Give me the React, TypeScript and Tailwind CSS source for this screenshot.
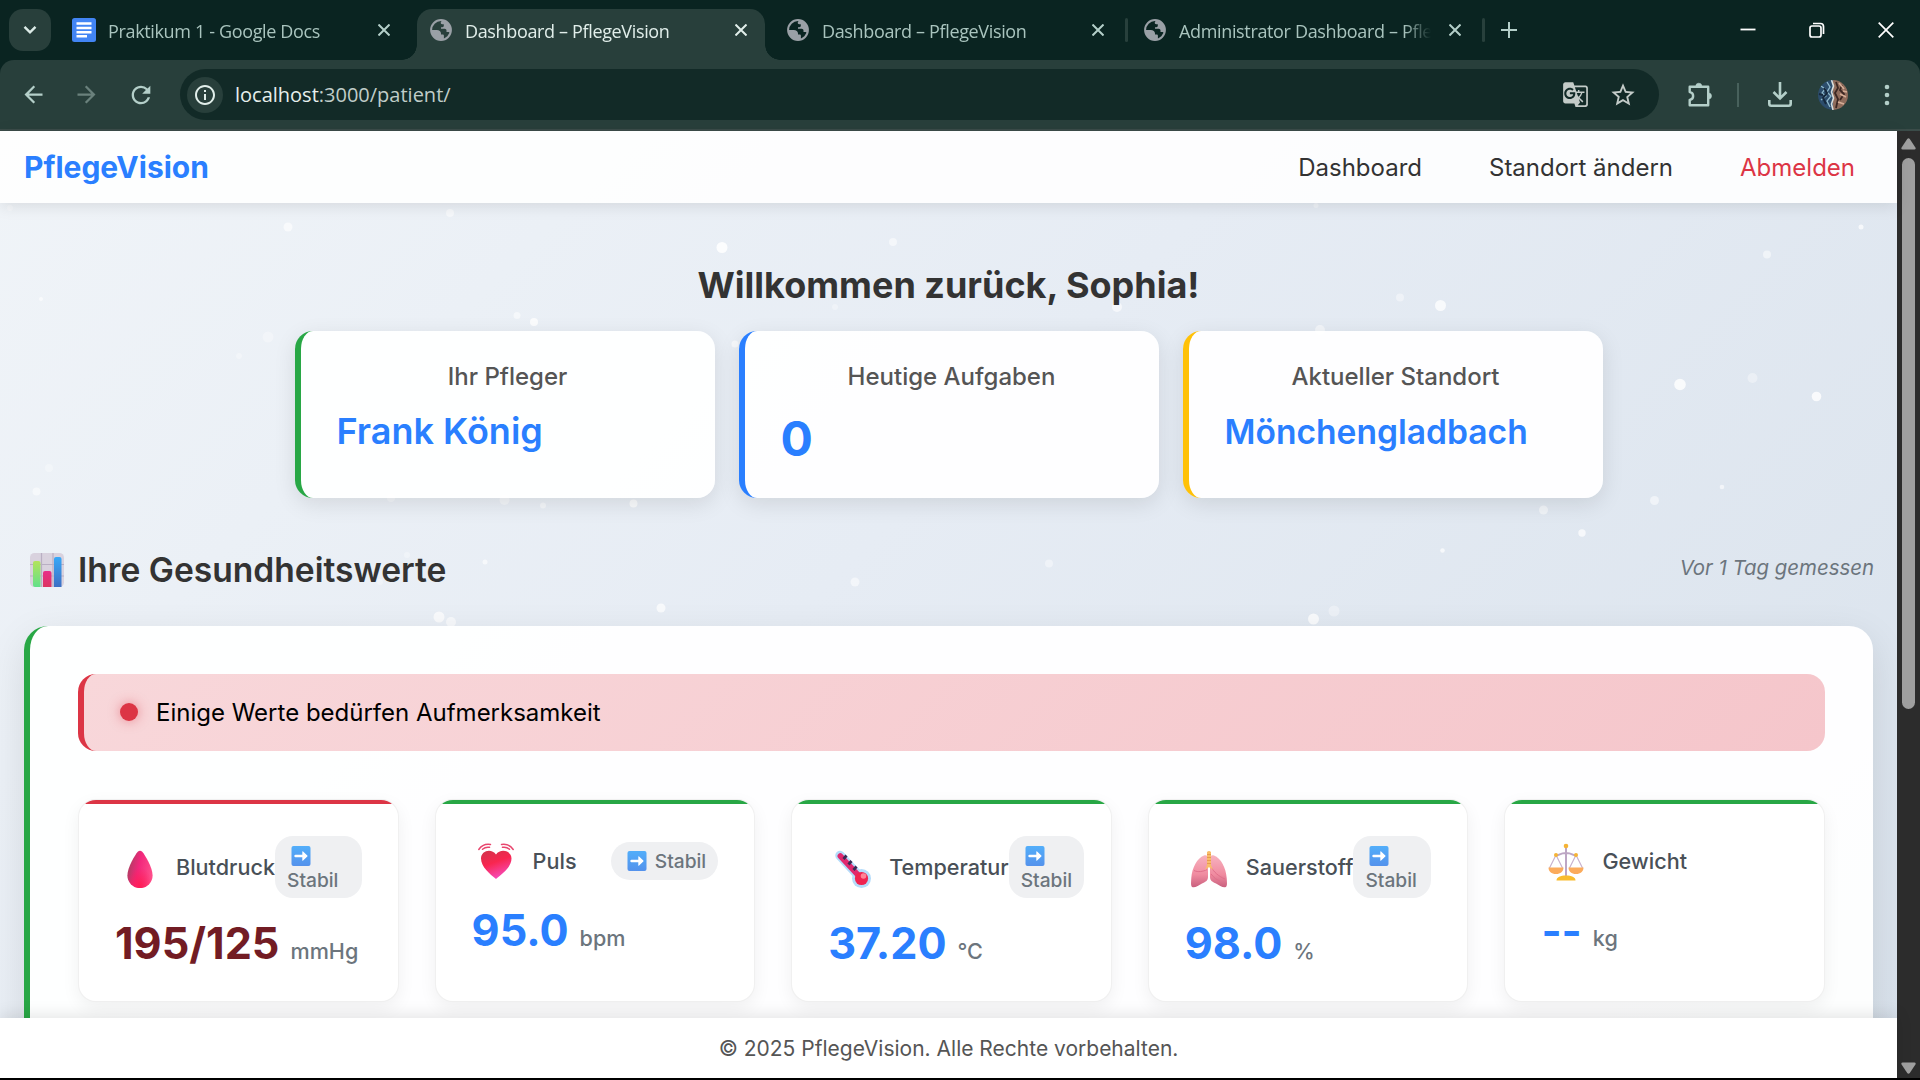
import React from 'react';
import type { ReactNode } from 'react';
import { MdArrowBack, MdArrowForward, MdGTranslate, MdInfoOutline, MdRefresh, MdStarBorder } from 'react-icons/md';

/* ---------- browser chrome ---------- */

function DocsIcon() {
  return (
    <svg viewBox="0 0 24 24" className="h-6 w-6 shrink-0">
      <rect width="24" height="24" rx="2.5" fill="#4285f4" />
      <path d="M4.500 5.600h15M4.500 10h15M4.500 14.200h15M4.500 18.300h10.500" stroke="#fff" strokeWidth="2.500" />
    </svg>
  );
}

function GlobeIcon() {
  return (
    <svg viewBox="0 0 24 24" className="h-[24px] w-[24px] shrink-0" fill="#9aa0a6">
      <circle cx="12" cy="12" r="9.9" fill="none" stroke="#9aa0a6" strokeWidth="2" />
      <path d="M13 2.2c5 .4 9 4.500 9 9.800 0 1.200-.2 2.300-.6 3.300-.6-.9-1.500-1.300-2.600-1.300h-1.300v-1.500c0-1-.8-1.700-1.700-1.700h-3.800V9.200h1.300c1 0 1.500-.6 1.500-1.400V6.300h-1.500c-1.200 0-1.700-1-1.500-2z" />
      <path d="M2.200 12h5.600c2.400 0 4.200 1.300 4.200 3.400v1h1.500c.9 0 1.400.5 1.400 1.300v3.700C9 23.300 2.700 19.500 2.200 12z" />
    </svg>
  );
}

function CloseIcon({ className }: { className: string }) {
  return (
    <svg viewBox="0 0 12 12" className={className} fill="none" stroke="currentColor" strokeWidth="2">
      <path d="M.5.500l11 11M11.500.500l-11 11" />
    </svg>
  );
}

interface TabProps {
  title: string;
  icon: ReactNode;
  active?: boolean;
  divider?: boolean;
}

function Tab({ title, icon, active = false, divider = false }: TabProps) {
  return (
    <div className="relative flex h-full w-[357px] shrink-0 items-center">
      {active && (
        <div className="absolute top-[9px] bottom-0 left-0 w-[348px] rounded-t-[15px] bg-[#283f3b]">
          <div className="absolute bottom-0 -left-[15px] h-[15px] w-[15px] bg-[radial-gradient(circle_at_0_0,transparent_14.500px,#283f3b_15px)]" />
          <div className="absolute -right-[15px] bottom-0 h-[15px] w-[15px] bg-[radial-gradient(circle_at_100%_0,transparent_14.500px,#283f3b_15px)]" />
        </div>
      )}
      <div className={`relative flex h-full w-full items-center pl-3 ${active ? 'text-[#e1eeea]' : 'text-[#a9c4be]'}`}>
        {icon}
        <div className="ml-3 w-[252px] overflow-hidden pt-[1px] font-['Open_Sans',sans-serif] text-[18px] leading-[26px] tracking-[-0.350px] whitespace-nowrap [mask-image:linear-gradient(to_right,#000_225px,transparent_252px)]">
          {title}
        </div>
        <CloseIcon className={`ml-[18px] h-3 w-3 shrink-0 ${active ? 'text-[#e1eeea]' : 'text-[#b4cfc9]'}`} />
        {divider && <div className="ml-[21px] h-6 w-[3px] rounded-full bg-[#28403c]" />}
      </div>
    </div>
  );
}

function TabStrip() {
  return (
    <div className="flex h-[60px] shrink-0 items-center bg-[#0a2421]">
      <div className="mr-[9px] ml-[9px] flex h-[42px] w-[42px] shrink-0 items-center justify-center rounded-[14px] bg-[#283f3b]">
        <svg viewBox="0 0 14 10" className="h-[10px] w-[14px]" fill="none" stroke="#dcebe7" strokeWidth="2.400">
          <path d="M1.500 1.800L7 7.300l5.500-5.500" />
        </svg>
      </div>
      <Tab title="Praktikum 1 - Google Docs" icon={<DocsIcon />} />
      <Tab title="Dashboard – PflegeVision" icon={<GlobeIcon />} active />
      <Tab title="Dashboard – PflegeVision" icon={<GlobeIcon />} divider />
      <Tab title="Administrator Dashboard – Pfle" icon={<GlobeIcon />} divider />
      <svg viewBox="0 0 16 16" className="ml-[13px] h-4 w-4 shrink-0" stroke="#b4cfc9" strokeWidth="2">
        <path d="M8 0v16M0 8h16" />
      </svg>
      <div className="ml-auto flex items-center pr-[26px] text-white">
        <svg viewBox="0 0 16 16" className="h-4 w-4" stroke="currentColor" strokeWidth="1.800">
          <path d="M.5 7.500h15" />
        </svg>
        <svg viewBox="0 0 16 16" className="ml-[53px] h-4 w-4" fill="none" stroke="currentColor" strokeWidth="1.700">
          <rect x="1" y="4" width="11" height="11" rx="2" />
          <path d="M4 1.500h7.500a3 3 0 0 1 3 3V12" />
        </svg>
        <svg viewBox="0 0 16 16" className="ml-[53px] h-4 w-4" stroke="currentColor" strokeWidth="1.700">
          <path d="M.7.700l14.600 14.600M15.300.700L.7 15.300" />
        </svg>
      </div>
    </div>
  );
}

function Avatar() {
  return (
    <svg viewBox="0 0 30 30" className="ml-[25px] h-[30px] w-[30px]">
      <clipPath id="avatar">
        <circle cx="15" cy="15" r="15" />
      </clipPath>
      <g clipPath="url(#avatar)">
        <rect width="15" height="30" fill="#2c4d6c" />
        <rect x="15" width="15" height="30" fill="#8f6c5c" />
        <path d="M3 6l4 3-3 4 4 3-5 4M9 2l3 5-3 5 4 4-4 5 3 6" stroke="#8fb9cd" strokeWidth="1.300" fill="none" />
        <path d="M6 8l3 5-4 5 3 6M1 14l4 1" stroke="#16293d" strokeWidth="2" fill="none" />
        <path d="M13.500 0l2 6-2 6 2 6-2 6 1.500 6" stroke="#d9dedd" strokeWidth="1.600" fill="none" />
        <path d="M18 2l2 6-3 5 3 6-2 9M24 5l-2 5 4 4-4 6" stroke="#3b2723" strokeWidth="1.800" fill="none" />
        <path d="M21 3l5 6M22 14l6 3M20 22l6 2M25 11l4 1" stroke="#d6ad96" strokeWidth="1.700" fill="none" />
      </g>
    </svg>
  );
}

function Toolbar() {
  return (
    <div className="h-[71px] shrink-0 bg-[#0a2421]">
      <div className="flex h-full items-center rounded-t-[14px] border-b-2 border-[#3b4c49] bg-[#283f3b] text-[#b4cfc9]">
        <MdArrowBack className="ml-[20px] h-[27px] w-[27px]" />
        <MdArrowForward className="ml-[26px] h-[27px] w-[27px] text-[#6a817c]" />
        <MdRefresh className="ml-[27px] h-[28px] w-[28px]" />
        <div className="ml-[25px] flex h-[51px] w-[1479px] items-center rounded-full bg-[#122a27] pl-[7px]">
          <div className="flex h-9 w-9 items-center justify-center rounded-full bg-[#283f3b] text-[#e1eeea]">
            <MdInfoOutline className="h-6 w-6" />
          </div>
          <div className="ml-[12px] font-['Open_Sans',sans-serif] text-[20px] leading-[28px] text-[#c0cdc9]">
            <span className="text-[#e6efec]">localhost</span>:3000/patient/
          </div>
          <MdGTranslate className="ml-auto h-[27px] w-[27px] text-[#c3cbc8]" />
          <MdStarBorder className="mr-[22px] ml-[20px] h-[28px] w-[28px] text-[#c3cbc8]" />
        </div>
        <svg viewBox="0 0 26 26" className="ml-[28px] h-[26px] w-[26px]" fill="none" stroke="currentColor" strokeWidth="2.400" strokeLinejoin="round">
          <path d="M2.700 4.700h18.500v18.600H2.700v-5.400c4.600-.6 4.600-7.200 0-7.800z" />
          <path d="M8.800 4.200a3 3 0 0 1 6 0zM21.500 11a3 3 0 0 1 0 6z" fill="currentColor" strokeWidth="0.600" />
        </svg>
        <div className="ml-[24px] h-6 w-[2px] bg-[#48615c]" />
        <svg viewBox="0 0 26 26" className="ml-[28px] h-[26px] w-[26px]" fill="none" stroke="currentColor" strokeWidth="2.600">
          <path d="M13 0v16M6.500 10l6.500 6.500 6.500-6.500M2.300 18v3.700c0 1.100.9 2 2 2h17.400c1.100 0 2-.9 2-2V18" />
        </svg>
        <Avatar />
        <svg viewBox="0 0 6 22" className="ml-[36px] h-[22px] w-[6px]" fill="currentColor">
          <circle cx="3" cy="3" r="2.300" />
          <circle cx="3" cy="11" r="2.300" />
          <circle cx="3" cy="19" r="2.300" />
        </svg>
      </div>
    </div>
  );
}

function Scrollbar() {
  return (
    <div className="flex w-[23px] shrink-0 flex-col items-center bg-[#2c2c2c]">
      <svg viewBox="0 0 15 12" className="mt-[7px] h-3 w-[15px]" fill="#9f9f9f">
        <path d="M6.200.9Q7.500-.5 8.800.9l5.600 8.500q.9 2-1.100 2.100H1.700Q-.3 11.400.6 9.400z" />
      </svg>
      <div className="mt-2 h-[551px] w-[13px] rounded-full bg-[#9f9f9f]" />
      <svg viewBox="0 0 15 12" className="mt-auto mb-1 h-3 w-[15px] rotate-180" fill="#9f9f9f">
        <path d="M6.200.9Q7.500-.5 8.800.9l5.600 8.500q.9 2-1.100 2.100H1.700Q-.3 11.400.6 9.400z" />
      </svg>
    </div>
  );
}

/* ---------- background sparkles: x, y, radius, opacity ---------- */

const SPARKLES: [number, number, number, number][] = [
  [288, 227, 4.5, 0.6], [450, 213, 4, 0.5], [722, 247.5, 5.5, 0.85], [893, 242, 4, 0.5], [41, 299, 2, 0.6],
  [517, 315.5, 3.5, 0.5], [534, 322, 4, 0.8], [268, 337, 5.5, 0.3], [239, 356, 3, 0.3], [835, 307, 3, 0.3],
  [735, 344, 3.5, 0.6], [49, 468, 4, 0.3], [36.5, 491.5, 4, 0.5], [504.5, 500, 5, 0.45], [543, 505.5, 3, 0.5],
  [633.5, 503.5, 4, 0.75], [391, 498, 4, 0.4], [407, 555, 3, 0.3], [485, 562, 2.5, 0.6], [380, 582, 3, 0.3],
  [855, 582, 4.5, 0.5], [661, 608, 4.5, 0.7], [439, 617, 5.5, 0.7], [451, 622, 5, 0.6], [10, 208, 3, 0.3],
  [1316, 205.5, 2.5, 0.4], [1861, 227, 2.5, 0.7], [1767, 254.5, 4, 0.5], [1400, 297.5, 4, 0.4],
  [1440.5, 305.5, 5.5, 0.75], [1117, 307, 5, 0.6], [1320, 330, 5, 0.5], [1680, 384.5, 5.8, 0.8],
  [1752.5, 378, 5, 0.35], [1816.5, 396.5, 4.8, 0.8], [1722, 487, 2.3, 0.6], [1654.5, 500.5, 4.5, 0.5],
  [1543.5, 510, 4.5, 0.5], [1582, 533, 3.7, 0.7], [1442.5, 550.5, 2.3, 0.7], [1049, 563.5, 4, 0.4],
  [1313.5, 619, 5.5, 0.75], [1334, 611, 5.5, 0.35],
];

function Sparkles() {
  return (
    <svg viewBox="0 131 1897 947" className="pointer-events-none absolute inset-0 h-full w-full" fill="#fff">
      {SPARKLES.map(([x, y, r, o]) => (
        <circle key={`${x}-${y}`} cx={x} cy={y} r={r} opacity={o} />
      ))}
    </svg>
  );
}

/* ---------- emoji ---------- */

function ChartEmoji() {
  return (
    <svg viewBox="0 0 34 34" className="h-[34px] w-[34px] shrink-0">
      <defs>
        <linearGradient id="barGreen" x1="0" y1="0" x2="0" y2="1">
          <stop stopColor="#b4e35c" />
          <stop offset="1" stopColor="#62e08a" />
        </linearGradient>
        <linearGradient id="barBlue" x1="0" y1="0" x2="0" y2="1">
          <stop stopColor="#38a9f8" />
          <stop offset="1" stopColor="#3d6fc4" />
        </linearGradient>
        <linearGradient id="barPink" x1="0" y1="0" x2="0" y2="1">
          <stop stopColor="#e8308a" />
          <stop offset="1" stopColor="#dc3560" />
        </linearGradient>
      </defs>
      <rect width="34" height="34" rx="4.500" fill="#d9d2de" />
      <path d="M11.500 0v34M23 0v34M0 11.500h34M0 23h34" stroke="#b9afc3" strokeWidth="1.200" />
      <path d="M3 10a2 2 0 0 1 2-2h3.500a2 2 0 0 1 2 2v24H5a2 2 0 0 1-2-2z" fill="url(#barGreen)" />
      <path d="M13 20a2 2 0 0 1 2-2h4.500a2 2 0 0 1 2 2v14H13z" fill="url(#barPink)" />
      <path d="M24 6a2 2 0 0 1 2-2h3.500a2 2 0 0 1 2 2v28H24z" fill="url(#barBlue)" />
    </svg>
  );
}

function DropEmoji() {
  return (
    <svg viewBox="0 0 36 38" className="h-[38px] w-[36px]">
      <defs>
        <linearGradient id="drop" x1="0" y1="0.300" x2="1" y2="0.600">
          <stop stopColor="#a8405f" />
          <stop offset=".45" stopColor="#f2277c" />
          <stop offset="1" stopColor="#ff4f8b" />
        </linearGradient>
        <radialGradient id="dropGlow" cx=".5" cy=".95" r=".5">
          <stop stopColor="#ff1c55" />
          <stop offset="1" stopColor="#ff1c55" stopOpacity="0" />
        </radialGradient>
      </defs>
      <path d="M15.800 1.800Q18-.4 20.200 1.800C23 5 30.600 17.500 30.600 25.500a12.600 12.600 0 0 1-25.200 0C5.400 17.500 13 5 15.800 1.800z" fill="url(#drop)" />
      <path d="M15.800 1.800Q18-.4 20.200 1.800C23 5 30.600 17.500 30.600 25.500a12.600 12.600 0 0 1-25.200 0C5.400 17.500 13 5 15.800 1.800z" fill="url(#dropGlow)" />
    </svg>
  );
}

function HeartEmoji() {
  return (
    <svg viewBox="0 0 36 38" className="h-[38px] w-[36px]">
      <defs>
        <linearGradient id="heart" x1="0.300" y1="0" x2="0.700" y2="1">
          <stop stopColor="#d8324c" />
          <stop offset=".4" stopColor="#f8264f" />
          <stop offset="1" stopColor="#f650c8" />
        </linearGradient>
      </defs>
      <path d="M18 36C12 31 3 24 3 15.500 3 7.500 13.500 5 18 11.500 22.500 5 33.500 7.500 33.500 15.500 33.500 24 24 31 18 36z" fill="url(#heart)" />
      <path d="M.8 6.500C3.500 2.500 8 .8 12.500 1.500M4.500 6.300C6.500 4.500 9 3.800 11.500 4.300M35.200 6.500C32.500 2.500 28 .8 23.500 1.500M31.500 6.300C29.500 4.500 27 3.800 24.500 4.300" stroke="#e8466e" strokeWidth="1.500" fill="none" strokeLinecap="round" />
    </svg>
  );
}

function ThermometerEmoji() {
  return (
    <svg viewBox="0 0 36 38" className="h-[38px] w-[36px]">
      <path d="M5 5.500L24 26" stroke="#b5dcfa" strokeWidth="9.500" strokeLinecap="round" />
      <circle cx="26.500" cy="28.500" r="9.500" fill="#b5dcfa" />
      <path d="M5.300 6L24 26" stroke="#e0286f" strokeWidth="5.500" strokeLinecap="round" />
      <path d="M8.500 9l3-3.500M13.500 14.500l3-3.500M18.500 20l3-3.500" stroke="#3a2a55" strokeWidth="2.800" />
      <circle cx="26.500" cy="28.500" r="6.600" fill="#f02350" />
      <circle cx="28.500" cy="26" r="2.800" fill="#ff8396" />
    </svg>
  );
}

function LungsEmoji() {
  return (
    <svg viewBox="0 0 36 38" className="h-[38px] w-[36px]">
      <defs>
        <linearGradient id="lung" x1="0" y1="0" x2="0" y2="1">
          <stop stopColor="#f7b3bf" />
          <stop offset=".6" stopColor="#f08ba0" />
          <stop offset="1" stopColor="#c9607e" />
        </linearGradient>
      </defs>
      <path d="M13 5.500c2.500-1 4 .5 4 3.500v18c0 4-3 5-6 6.500-3 1.800-6 4-9 3.800C-.6 37.100 0 33 .3 28 1 18 6 8 13 5.500z" fill="url(#lung)" />
      <path d="M23 5.500c-2.500-1-4 .5-4 3.500v18c0 4 3 5 6 6.500 3 1.800 6 4 9 3.800 2.600-.2 2-4.300 1.700-9.300C35 18 30 8 23 5.500z" fill="url(#lung)" />
      <path d="M3 20.500c4 2 9 1 13-.8M20 17c3 5 7 9 14 12M20 24c3 4 6 6 9 7" stroke="#e06f8a" strokeWidth="1" fill="none" />
      <path d="M16 2q2-2 4 0v13l2 5-3-2.500h-2L14 20l2-5z" fill="#f8bd6a" />
      <path d="M16 4.500h4M16 7.500h4M16 10.500h4M16 13.500h4" stroke="#e79a4e" strokeWidth="1" />
    </svg>
  );
}

function ScalesEmoji() {
  return (
    <svg viewBox="0 0 36 38" className="h-[38px] w-[36px]">
      <path d="M8 12L1.500 25M8 12l6.500 13M28 12l-6.500 13M28 12l6.500 13" stroke="#c9b3cf" strokeWidth="1.200" fill="none" />
      <path d="M18 4v29M8 12.500c3 0 4-2.500 10-2.500s7 2.500 10 2.500" stroke="#bda6c4" strokeWidth="2" fill="none" />
      <path d="M.5 24.500h15c0 4-3 6.500-7.500 6.500S.5 28.500.5 24.500zM20.500 24.500h15c0 4-3 6.500-7.500 6.500s-7.500-2.500-7.500-6.500z" fill="#fbab5c" />
      <path d="M8.500 37.500c0-3.500 4-5 9.500-5s9.500 1.500 9.500 5z" fill="#f9bc2e" />
      <circle cx="18" cy="3" r="2.300" fill="#f5b335" />
      <circle cx="8" cy="12" r="2" fill="#f5b335" />
      <circle cx="28" cy="12" r="2" fill="#f5b335" />
    </svg>
  );
}

function ArrowEmoji({ className }: { className: string }) {
  return (
    <svg viewBox="0 0 20 20" className={className}>
      <defs>
        <linearGradient id="arrowBox" x1="0" y1="0" x2="0" y2="1">
          <stop stopColor="#52aefa" />
          <stop offset="1" stopColor="#5492ec" />
        </linearGradient>
      </defs>
      <rect x=".5" width="19" height="20" rx="2" fill="url(#arrowBox)" />
      <path d="M4.500 10H12" stroke="#fff" strokeWidth="2.400" strokeLinecap="round" />
      <path d="M11.300 5.800q0-.9.800-.4l4.200 4q.6.600 0 1.200l-4.200 4q-.8.500-.8-.4z" fill="#fff" />
    </svg>
  );
}

/* ---------- page ---------- */

function NavBar() {
  return (
    <nav className="relative z-10 flex h-[72px] shrink-0 items-center bg-white/90 pr-[42px] pl-6 shadow-[0_3px_15px_rgba(0,0,0,0.1)]">
      <span className="text-[30px] leading-none font-bold text-[#2a7fff]">PflegeVision</span>
      <div className="ml-auto flex gap-[67px] pt-[2px] text-2xl leading-[36px] text-[#333]">
        <span>Dashboard</span>
        <span>Standort ändern</span>
        <span className="text-[#dc3545]">Abmelden</span>
      </div>
    </nav>
  );
}

function SummaryCard({ title, accent, children }: { title: string; accent: string; children: ReactNode }) {
  return (
    <div className={`h-[167px] w-[420px] rounded-[18px] border-l-[6px] bg-white/95 px-9 pt-7 shadow-[0_6px_22px_rgba(0,0,0,0.1)] ${accent}`}>
      <h3 className="text-center text-2xl leading-[36px] font-medium text-[#555]">{title}</h3>
      <div className="mt-[9px] text-[#2a7fff]">{children}</div>
    </div>
  );
}

function TrendBadge({ stacked }: { stacked: boolean }) {
  if (stacked) {
    return (
      <div className="flex-1 rounded-[18px] bg-[#eff0f2] px-3 pt-2 pb-1.5 text-[19.200px] leading-6 font-medium text-[#6c757d]">
        <div className="flex h-6 items-center pl-1">
          <ArrowEmoji className="h-5 w-5" />
        </div>
        Stabil
      </div>
    );
  }
  return (
    <div className="ml-auto flex h-[38px] items-center rounded-full bg-[#eff0f2] pr-3 pl-4 text-[19.200px] font-medium text-[#6c757d]">
      <ArrowEmoji className="mr-2 h-5 w-5" />
      <span className="leading-6">Stabil</span>
    </div>
  );
}

interface Metric {
  label: string;
  value: string;
  unit: string;
  icon: ReactNode;
  trend: 'stacked' | 'inline' | 'none';
  critical?: boolean;
}

const METRICS: Metric[] = [
  { label: 'Blutdruck', value: '195/125', unit: 'mmHg', icon: <DropEmoji />, trend: 'stacked', critical: true },
  { label: 'Puls', value: '95.0', unit: 'bpm', icon: <HeartEmoji />, trend: 'inline' },
  { label: 'Temperatur', value: '37.20', unit: '°C', icon: <ThermometerEmoji />, trend: 'stacked' },
  { label: 'Sauerstoff', value: '98.0', unit: '%', icon: <LungsEmoji />, trend: 'stacked' },
  { label: 'Gewicht', value: '--', unit: 'kg', icon: <ScalesEmoji />, trend: 'none' },
];

function MetricCard({ metric }: { metric: Metric }) {
  return (
    <div className="overflow-hidden rounded-[18px] border border-black/[0.06] bg-white shadow-[0_6px_18px_rgba(0,0,0,0.06)]">
      <div className={`h-1 ${metric.critical ? 'bg-[#dc3545]' : 'bg-[#28a745]'}`} />
      <div className="px-9 pt-8 pb-[34px]">
        <div className="flex min-h-[49px] items-center">
          <div className="flex w-[49px] shrink-0 justify-center pt-[3px]">{metric.icon}</div>
          <span className="ml-3 shrink-0 text-[21.600px] leading-[32px] font-medium text-[#495057]">{metric.label}</span>
          {metric.trend !== 'none' && <TrendBadge stacked={metric.trend === 'stacked'} />}
        </div>
        <div className="mt-6 flex items-baseline">
          <span className={`text-[43.200px] leading-[43px] font-bold ${metric.critical ? 'text-[#721c24]' : 'text-[#2a7fff]'}`}>
            {metric.value}
          </span>
          <span className="ml-[11px] text-[21.600px] leading-[32px] font-medium text-[#6c757d]">{metric.unit}</span>
        </div>
      </div>
    </div>
  );
}

function HealthPanel() {
  return (
    <section className="mt-8 h-[520px] shrink-0 rounded-[24px] border-l-[6px] border-[#28a745] bg-white/95 p-12 shadow-[0_12px_38px_rgba(0,0,0,0.1)]">
      <div className="flex h-[77px] items-center rounded-[18px] border-l-[6px] border-[#dc3545] bg-[linear-gradient(135deg,#f8d7da,#f5c6cb)] pl-9">
        <span className="mb-px h-[18px] w-[18px] rounded-full bg-[#dc3545] shadow-[0_0_12px_rgba(220,53,69,0.5)]" />
        <span className="ml-[18px] text-2xl leading-[36px] text-black">Einige Werte bedürfen Aufmerksamkeit</span>
      </div>
      <div className="mt-12 grid grid-cols-5 gap-9">
        {METRICS.map((metric) => (
          <MetricCard key={metric.label} metric={metric} />
        ))}
      </div>
    </section>
  );
}

export default function App() {
  return (
    <div className="flex h-[1080px] w-[1920px] flex-col overflow-hidden bg-black font-['Inter',sans-serif]">
      <TabStrip />
      <Toolbar />
      <div className="flex h-[947px] shrink-0">
        <div className="relative flex w-[1897px] flex-col bg-[linear-gradient(135deg,#f0f4f8_0%,#e6ecf4_45%,#d9e2ec_100%)]">
          <Sparkles />
          <NavBar />
          <main className="relative flex min-h-0 flex-1 flex-col overflow-hidden px-6 pt-[60px]">
            <h1 className="shrink-0 text-center text-[36px] leading-[44px] font-bold text-[#333]">Willkommen zurück, Sophia!</h1>
            <div className="mt-6 flex shrink-0 justify-center gap-6">
              <SummaryCard title="Ihr Pfleger" accent="border-[#28a745]">
                <p className="text-[36px] leading-[54px] font-semibold">Frank König</p>
              </SummaryCard>
              <SummaryCard title="Heutige Aufgaben" accent="border-[#2a7fff]">
                <p className="text-5xl leading-[69px] font-bold">0</p>
              </SummaryCard>
              <SummaryCard title="Aktueller Standort" accent="border-[#ffc107]">
                <p className="text-[33.600px] leading-[55px] font-semibold">Mönchengladbach</p>
              </SummaryCard>
            </div>
            <div className="mt-12 flex h-12 shrink-0 items-start">
              <h2 className="flex items-center gap-[14px] pl-[6px] text-[33.600px] leading-[48px] font-semibold text-[#333]">
                <ChartEmoji />
                <span>Ihre Gesundheitswerte</span>
              </h2>
              <span className="-mr-px ml-auto text-[20.400px] leading-[43px] text-[#6c757d] italic">Vor 1 Tag gemessen</span>
            </div>
            <HealthPanel />
          </main>
          <footer className="relative z-10 flex h-[60px] shrink-0 items-center justify-center bg-white pt-[2px] shadow-[0_-3px_15px_rgba(0,0,0,0.1)]">
            <p className="text-[21px] leading-[32px] text-[#555]">© 2025 PflegeVision. Alle Rechte vorbehalten.</p>
          </footer>
        </div>
        <Scrollbar />
      </div>
    </div>
  );
}
